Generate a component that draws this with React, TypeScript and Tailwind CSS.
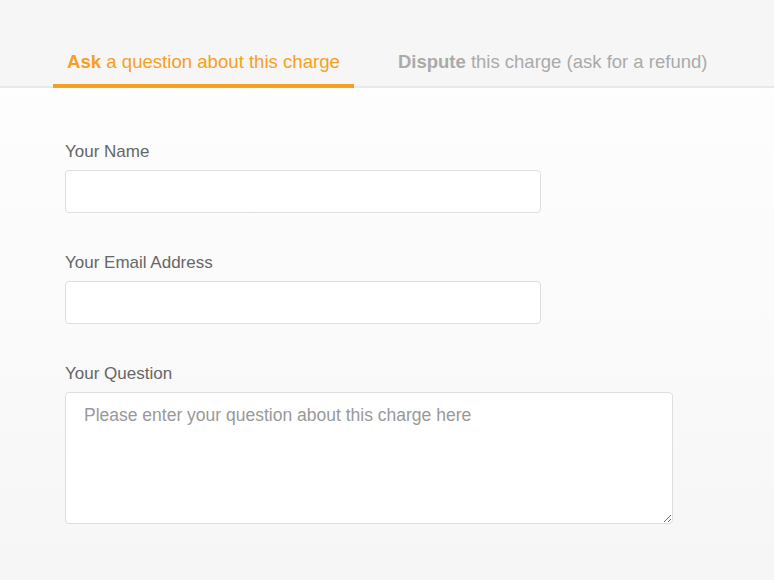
const font = { fontFamily: '"Liberation Sans", Arial, Helvetica, sans-serif' };

const Field = ({ label, tall, placeholder }: { label: string; tall?: boolean; placeholder?: string }) => (
  <div className="flex flex-col">
    <label className="text-[17px] leading-[24px] text-[#666] mb-[6px]">{label}</label>
    {tall ? (
      <textarea
        placeholder={placeholder}
        className="w-[608px] h-[132px] rounded-[4px] border border-[#dedede] bg-white px-[18px] py-[10px] text-[17.5px] leading-[24px] text-[#555] placeholder:text-[#999] outline-none"
      />
    ) : (
      <input
        type="text"
        className="w-[476px] h-[43px] rounded-[4px] border border-[#dedede] bg-white px-[14px] text-[17px] text-[#555] outline-none"
      />
    )}
  </div>
);

export default function App() {
  return (
    <div className="w-[774px] h-[580px] overflow-hidden bg-gradient-to-b from-white to-[#f6f6f7]" style={font}>
      <div className="h-[88px] bg-[#f6f6f6] border-b-2 border-[#e9e9e9] flex items-end gap-[30px] pl-[53px]">
        <button className="-mb-[2px] px-[14px] pb-[10px] border-b-4 border-[#f79f1f] text-[18.6px] leading-[24px] text-[#f79f1f]">
          <span className="font-bold">Ask</span> a question about this charge
        </button>
        <button className="-mb-[2px] px-[14px] pb-[10px] border-b-4 border-transparent text-[18.5px] leading-[24px] text-[#aaa]">
          <span className="font-bold">Dispute</span> this charge (ask for a refund)
        </button>
      </div>
      <form className="flex flex-col gap-[38px] pl-[65px] pt-[52px]">
        <Field label="Your Name" />
        <Field label="Your Email Address" />
        <Field label="Your Question" tall placeholder="Please enter your question about this charge here" />
      </form>
    </div>
  );
}
